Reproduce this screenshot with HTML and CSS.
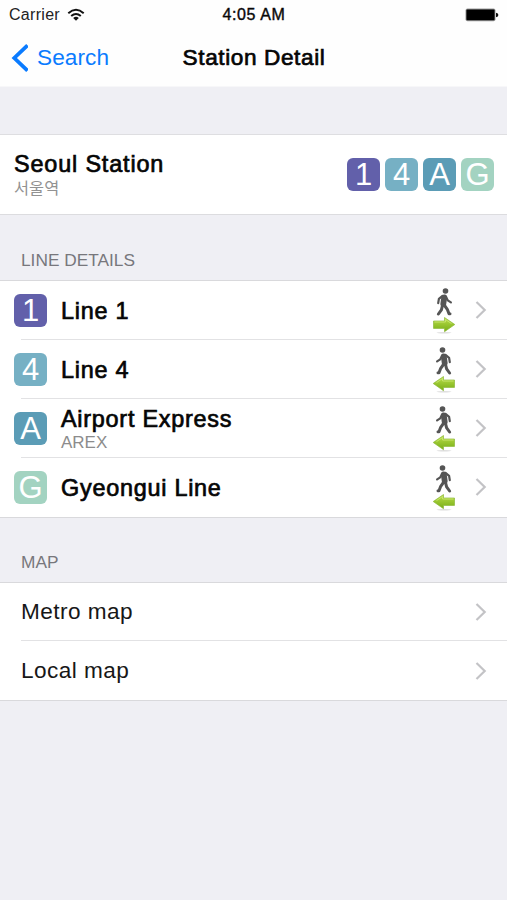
FILE: index.html
```
<!DOCTYPE html>
<html lang="en">
<head>
<meta charset="utf-8">
<title>Station Detail</title>
<link rel="stylesheet" href="styles.css">
</head>
<body>
<svg width="0" height="0" class="defs" aria-hidden="true">
  <defs>
    <linearGradient id="green" x1="0" y1="0" x2="0" y2="1">
      <stop offset="0" stop-color="#b9de48"/>
      <stop offset="1" stop-color="#78ad17"/>
    </linearGradient>
    <symbol id="walk" viewBox="0 0 24 46">
      <g fill="none" stroke="#555" stroke-linecap="round" stroke-linejoin="round">
        <path d="M12.2 9.3L11.3 16" stroke-width="5.8"/>
        <path d="M10.5 7.8L6.9 10.8L6.2 15.2" stroke-width="2.2"/>
        <path d="M14 8.8L15.8 12.4L18.9 14.4" stroke-width="2.2"/>
        <path d="M10.6 17L9.4 21.8L6.4 26" stroke-width="3"/>
        <path d="M12.2 17L15.3 21.3L17 25.8H18" stroke-width="3"/>
      </g>
      <circle cx="13.5" cy="3" r="2.8" fill="#555"/>
    </symbol>
    <symbol id="arrow" viewBox="0 0 24 46">
      <ellipse cx="12" cy="44.8" rx="7.5" ry=".8" fill="#dedede"/>
      <path d="M1.5 33H12.5V29.5L22.8 36.5L12.5 43.7V40.4H1.5Z" fill="url(#green)" stroke="#8cb93a" stroke-width=".7" stroke-linejoin="round"/>
      <path d="M2.4 34H13.4V31.5L19.5 35.6" fill="none" stroke="#cfea78" stroke-width=".8"/>
    </symbol>
    <symbol id="chevron" viewBox="0 0 12 20">
      <path d="M1.5 2L9.7 10L1.5 18" fill="none" stroke="#c3c3c6" stroke-width="2.2"/>
    </symbol>
  </defs>
</svg>
<header>
  <div class="status">
    <div class="carrier"><span>Carrier</span>
      <svg width="18" height="14" viewBox="0 0 18 14"><g fill="none" stroke="#111" stroke-width="2"><path d="M1.3 5.2Q9 -1.6 16.7 5.2"/><path d="M4.2 8.1Q9 4 13.8 8.1"/></g><path d="M6.2 9.9Q9 7.7 11.8 9.9L9 12.8Z" fill="#111"/></svg>
    </div>
    <div class="time">4:05 AM</div>
    <svg class="battery" width="34" height="14" viewBox="0 0 34 14"><rect x=".5" y=".6" width="30" height="12.6" rx="2" fill="#999"/><rect x="1.4" y="1.5" width="28.2" height="10.8" rx="1" fill="#000"/><path d="M31 4.8Q33.4 5.3 33.4 7T31 9.2Z" fill="#111"/></svg>
  </div>
  <nav>
    <a class="back"><svg width="18" height="30" viewBox="0 0 18 30"><path d="M17.5 2.3L4.3 15L17.5 27.7" fill="none" stroke="#0a7bff" stroke-width="3.8"/></svg><span>Search</span></a>
    <h1>Station Detail</h1>
  </nav>
</header>
<main>
  <section class="station">
    <div class="names"><div class="name">Seoul Station</div><div class="korean">서울역</div></div>
    <div class="badges"><span class="badge l1">1</span><span class="badge l4">4</span><span class="badge la">A</span><span class="badge lg">G</span></div>
  </section>
  <h2 class="lines-title">LINE DETAILS</h2>
  <ul>
    <li><span class="badge l1">1</span><div class="names"><div class="name">Line 1</div></div><svg class="transfer" width="24" height="46"><use href="#walk"/><use href="#arrow"/></svg><svg class="chevron" width="12" height="20"><use href="#chevron"/></svg></li>
    <li><span class="badge l4">4</span><div class="names"><div class="name">Line 4</div></div><svg class="transfer left" width="24" height="46"><use href="#walk"/><use href="#arrow"/></svg><svg class="chevron" width="12" height="20"><use href="#chevron"/></svg></li>
    <li><span class="badge la">A</span><div class="names"><div class="name">Airport Express</div><div class="sub">AREX</div></div><svg class="transfer left" width="24" height="46"><use href="#walk"/><use href="#arrow"/></svg><svg class="chevron" width="12" height="20"><use href="#chevron"/></svg></li>
    <li><span class="badge lg">G</span><div class="names"><div class="name">Gyeongui Line</div></div><svg class="transfer left" width="24" height="46"><use href="#walk"/><use href="#arrow"/></svg><svg class="chevron" width="12" height="20"><use href="#chevron"/></svg></li>
  </ul>
  <h2 class="map-title">MAP</h2>
  <ul class="maps">
    <li><span class="label">Metro map</span><svg class="chevron" width="12" height="20"><use href="#chevron"/></svg></li>
    <li><span class="label">Local map</span><svg class="chevron" width="12" height="20"><use href="#chevron"/></svg></li>
  </ul>
</main>
</body>
</html>
```
FILE: styles.css
```
* { box-sizing: border-box; }
body {
  margin: 0;
  height: 900px;
  overflow: hidden;
  background: #efeff4;
  color: #050505;
  font-family: "Liberation Sans", "Noto Sans CJK KR", sans-serif;
}
svg { display: block; flex: none; }
header { height: 87px; background: #fefefe; border-bottom: 1px solid #f7f7f9; }
.status {
  height: 30px;
  display: grid;
  grid-template-columns: 1fr auto 1fr;
  align-items: center;
  padding: 0 8px 0 9px;
  font-size: 16px;
  line-height: 30px;
}
.carrier { display: flex; align-items: center; gap: 7px; letter-spacing: .3px; color: #222; }
.time { font-size: 16px; letter-spacing: .6px; -webkit-text-stroke: .4px #111; }
.battery { justify-self: end; }
nav {
  height: 56px;
  display: grid;
  grid-template-columns: 1fr auto 1fr;
  align-items: center;
  padding-left: 10px;
}
.back { display: flex; align-items: center; gap: 9px; color: #0a7bff; font-size: 22.6px; letter-spacing: .1px; line-height: 28px; }
h1 {
  margin: 0 9px 0 0;
  font-size: 22.6px;
  line-height: 28px;
  font-weight: 400;
  letter-spacing: .6px;
  -webkit-text-stroke: .7px #050505;
}
main { padding-top: 47px; }
.station {
  height: 81px;
  display: flex;
  align-items: center;
  padding: 0 13px 0 14px;
  background: #fff;
  border-top: 1px solid #dedee1;
  border-bottom: 1px solid #dcdcdf;
}
.names { flex: 1; }
.name { font-size: 23.4px; line-height: 28px; letter-spacing: .85px; -webkit-text-stroke: .7px #050505; }
.korean { font-size: 16.4px; line-height: 21px; color: #929292; }
.sub { font-size: 17px; line-height: 20px; color: #8c8c8c; }
.badges { display: flex; gap: 5px; }
.badge {
  width: 33px;
  height: 33px;
  flex: none;
  border-radius: 6px;
  color: #fff;
  font-size: 31px;
  line-height: 34px;
  text-align: center;
}
.l1 { background: #6260aa; }
.l4 { background: #76b0c4; }
.la { background: #5b9cb6; }
.lg { background: #a3d3c1; }
h2 {
  margin: 0;
  padding: 34px 21px 0;
  height: 65px;
  font-size: 17.3px;
  line-height: 22px;
  font-weight: 400;
  color: #77777c;
}
.map-title { height: 64px; padding-top: 33px; }
ul {
  margin: 0;
  padding: 0;
  list-style: none;
  background: #fff;
  border-top: 1px solid #d9d9dc;
  border-bottom: 1px solid #d9d9dc;
}
li {
  height: 59px;
  display: flex;
  align-items: center;
  padding: 0 20px 1px 14px;
  background: linear-gradient(#e2e2e4, #e2e2e4) 21px 100% / 100% 1px no-repeat;
}
li:last-child { background: none; }
li .names { padding: 1px 0 0 14px; }
li .name { letter-spacing: .75px; }
.transfer { margin: 2px 19px 0 0; }
.left { transform: scaleX(-1); }
.maps li { height: 58px; padding-left: 21px; }
.maps li:last-child { height: 59px; padding-bottom: 0; }
.label { flex: 1; font-size: 22.6px; letter-spacing: .45px; color: #171717; }
```
